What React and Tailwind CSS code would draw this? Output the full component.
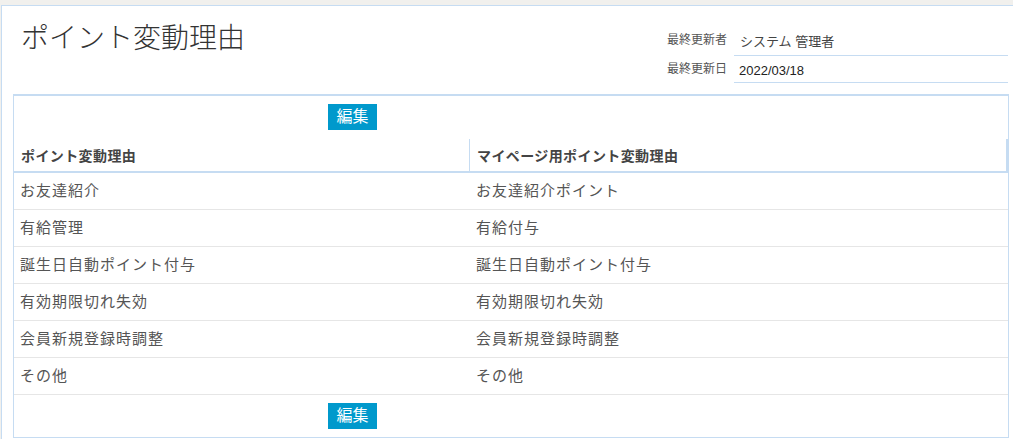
const rows = [
  ['お友達紹介', 'お友達紹介ポイント'],
  ['有給管理', '有給付与'],
  ['誕生日自動ポイント付与', '誕生日自動ポイント付与'],
  ['有効期限切れ失効', '有効期限切れ失効'],
  ['会員新規登録時調整', '会員新規登録時調整'],
  ['その他', 'その他'],
];

function EditButton() {
  return (
    <div className="pl-[314px]">
      <button
        type="button"
        className="w-[49px] h-[26px] bg-[#0099cc] text-white text-[16px] leading-[26px] text-center"
      >
        編集
      </button>
    </div>
  );
}

export default function App() {
  return (
    <div
      className="w-[1013px] h-[439px] overflow-hidden bg-[#f1f0ed] pt-[5px] text-[#555]"
      style={{ fontFamily: '"Liberation Sans", "Noto Sans CJK JP", sans-serif' }}
    >
      <div className="ml-[1px] w-[1020px] h-[440px] bg-white border-t border-l border-[#c6dcf2]">
        {/* page header */}
        <div className="flex items-start h-[88px]">
          <h1 className="ml-[19px] mt-[14px] text-[28px] leading-[38px] font-light text-[#333]">
            ポイント変動理由
          </h1>
          <div className="ml-auto mr-[12px] mt-[20px] w-[343px] grid grid-cols-[61px_274px] gap-x-[7px]">
            <div className="text-[12px] leading-[14px] pt-[7px] text-right text-[#555]">最終更新者</div>
            <div className="h-[30px] border-b border-[#c6dcf2] pl-[6px] pt-[9px] text-[13px] leading-[14px] text-[#444]">
              システム 管理者
            </div>
            <div className="text-[12px] leading-[14px] pt-[6px] text-right text-[#555]">最終更新日</div>
            <div className="h-[27px] border-b border-[#c6dcf2] pl-[5px] pt-[8px] text-[13px] leading-[14px] text-[#222]">
              2022/03/18
            </div>
          </div>
        </div>

        {/* reasons table */}
        <div className="ml-[11px] w-[996px] h-[344px] border-t-2 border-x border-b border-[#c6dcf2] pt-[8px]">
          <EditButton />
          <div className="mt-[9px] grid grid-cols-[456px_1fr] h-[34px] border-b-2 border-[#c6dcf2] border-r-2 text-[14px] tracking-[0.4px] font-bold text-[#444]">
            <div className="pl-[7px] pt-[9px] leading-[16px] border-r border-[#c6dcf2]">ポイント変動理由</div>
            <div className="pl-[7px] pt-[9px] leading-[16px]">マイページ用ポイント変動理由</div>
          </div>
          {rows.map(([a, b], i) => (
            <div
              key={i}
              className="grid grid-cols-[456px_1fr] h-[37px] border-b border-[#e6e6e6] text-[15px] tracking-[1px] text-[#555]"
            >
              <div className="pl-[6px] pt-[9px] leading-[18px]">{a}</div>
              <div className="pl-[6px] pt-[9px] leading-[18px]">{b}</div>
            </div>
          ))}
          <div className="mt-[8px]">
            <EditButton />
          </div>
        </div>
      </div>
    </div>
  );
}
